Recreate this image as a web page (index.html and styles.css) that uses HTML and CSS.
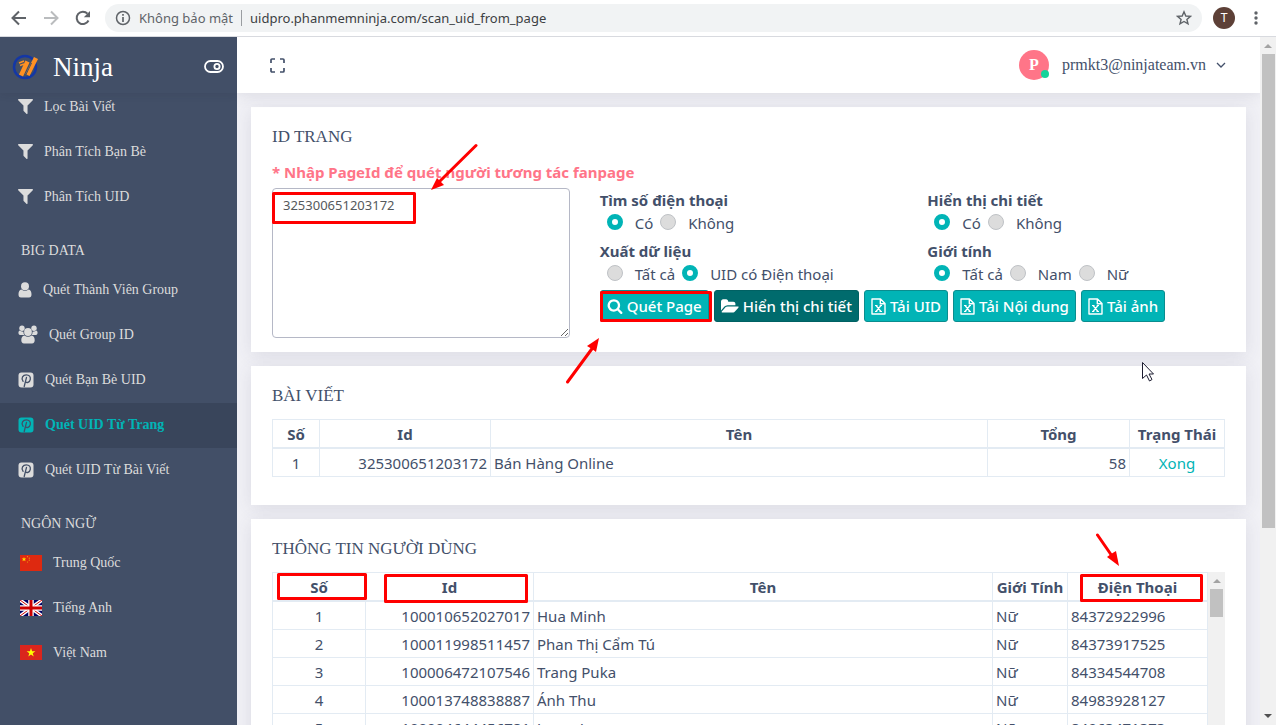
FILE: index.html
```html
<!DOCTYPE html>
<html lang="vi">
<head>
<meta charset="utf-8">
<title>Ninja - Quét UID Từ Trang</title>
<link rel="stylesheet" href="styles.css">
</head>
<body>
<svg class="defs" aria-hidden="true">
  <symbol id="filter" viewBox="192 256 1408 1408"><path fill="currentColor" d="M1595 295q17 41-14 70l-493 493v742q0 42-39 59-13 5-25 5-27 0-45-19l-256-256q-19-19-19-45v-486l-493-493q-31-29-14-70 17-39 59-39h1280q42 0 59 39z"/></symbol>
  <symbol id="pin" viewBox="0 0 16 16"><rect x=".5" y=".5" width="15" height="15" rx="3" fill="currentColor"/><path class="cut" d="M5.1 9.300C2.600 6 5 2.900 8.300 2.900c3 0 4.400 2 4 4.400-.5 3-3.800 4.200-4.900 2.200M8.500 5.400 6.200 14.500" fill="none" stroke-width="1.300" stroke-linecap="round"/></symbol>
  <symbol id="excel" viewBox="0 0 15 17"><path d="M1 1h8.500L14 5.500V16H1zM9.300 1v4.700H14" fill="none" stroke="currentColor" stroke-width="1.400" stroke-linejoin="round"/><path d="M5 7.500l5 6M10 7.500l-5 6M4 7.500h2.500M8.700 7.500H11M4 13.500h2.300M8.500 13.500H11" fill="none" stroke="currentColor" stroke-width="1.200"/></symbol>
</svg>

<header class="browser">
  <button class="nav-btn" aria-label="Quay lại"><svg width="16" height="16" viewBox="0 0 16 16"><path d="M15 8H2M8 1.500 1.500 8 8 14.500" fill="none" stroke="#5f6368" stroke-width="2"/></svg></button>
  <button class="nav-btn" aria-label="Tiến"><svg width="16" height="16" viewBox="0 0 16 16"><path d="M1 8h13M8 1.500 14.500 8 8 14.500" fill="none" stroke="#babcbe" stroke-width="2"/></svg></button>
  <button class="nav-btn" aria-label="Tải lại"><svg width="16" height="16" viewBox="0 0 16 16"><path d="M13.500 10.500A6.200 6.200 0 1 1 12.500 3.700" fill="none" stroke="#5f6368" stroke-width="2"/><path d="M15 1v6.200H8.800z" fill="#5f6368"/></svg></button>
  <div class="omnibox">
    <svg width="16" height="16" viewBox="0 0 16 16"><circle cx="8" cy="8" r="6.500" fill="none" stroke="#5f6368" stroke-width="1.500"/><path d="M8 7v5M8 4v1.700" stroke="#5f6368" stroke-width="1.700"/></svg>
    <span class="insecure">Không bảo mật</span>
    <input class="url" aria-label="Địa chỉ" value="uidpro.phanmemninja.com/scan_uid_from_page">
    <svg width="16" height="16" viewBox="0 0 16 16"><path d="M8 1.800l1.800 4.200 4.600.4-3.500 3 1.100 4.500L8 11.500l-4 2.400 1.100-4.500-3.500-3 4.600-.4z" fill="none" stroke="#5f6368" stroke-width="1.400"/></svg>
  </div>
  <span class="profile">T</span>
  <button class="nav-btn menu" aria-label="Trình đơn"><svg width="4" height="14" viewBox="0 0 4 14"><g fill="#5f6368"><circle cx="2" cy="2" r="1.700"/><circle cx="2" cy="7" r="1.700"/><circle cx="2" cy="12" r="1.700"/></g></svg></button>
</header>

<div class="app">
  <aside class="sidebar">
    <div class="brand">
      <svg width="28" height="28" viewBox="0 0 28 28"><circle cx="13" cy="14" r="11" fill="none" stroke="#1437a5" stroke-width="2.500"/><path d="M9 22.500 15.500 8.500M15.500 22 24 5" stroke="#ff9123" stroke-width="4.500"/><path d="M13 23.500 19.500 10" stroke="#424f67" stroke-width="1"/><path d="M7 10l5-2M8 12.500l4-1.500" stroke="#ff9123" stroke-width="1.500"/></svg>
      <span class="brand-name">Ninja</span>
      <button class="plain" aria-label="Thu gọn"><svg width="20" height="14" viewBox="0 0 20 14"><rect x="1" y="1" width="18" height="11" rx="5.500" fill="none" stroke="#fff" stroke-width="1.800"/><circle cx="13" cy="6.500" r="2.600" fill="none" stroke="#fff" stroke-width="1.800"/></svg></button>
    </div>
    <nav class="menu-list">
      <a href="#" class="item"><svg width="15" height="15"><use href="#filter"/></svg><span>Lọc Bài Viết</span></a>
      <a href="#" class="item"><svg width="15" height="15"><use href="#filter"/></svg><span>Phân Tích Bạn Bè</span></a>
      <a href="#" class="item"><svg width="15" height="15"><use href="#filter"/></svg><span>Phân Tích UID</span></a>
      <h2 class="group">BIG DATA</h2>
      <a href="#" class="item"><svg width="14" height="16" viewBox="0 0 14 16"><g fill="currentColor"><circle cx="7" cy="4.300" r="4"/><path d="M3.500 7.500c2 1.800 5 1.800 7 0 2.300.3 3 2.500 3 5 0 2-.8 3-2.500 3H3c-1.700 0-2.500-1-2.500-3 0-2.500.7-4.700 3-5z"/></g></svg><span>Quét Thành Viên Group</span></a>
      <a href="#" class="item"><svg width="20" height="19" viewBox="0 0 20 19"><g fill="currentColor"><circle cx="4" cy="3.200" r="2.700"/><circle cx="16" cy="3.200" r="2.700"/><path d="M1.500 5.500C4 7 5 6.500 5.500 6.700 5.300 8.500 6 9.300 6.400 10H2C.3 10-.3 7 1.500 5.500zM18.500 5.500C16 7 15 6.500 14.500 6.700c.2 1.800-.5 2.600-.9 3.300H18c1.700 0 2.300-3 .5-4.500z"/><circle cx="10" cy="7" r="3.900"/><path d="M6.500 10.500c2 1.700 5 1.700 7 0 2.500.3 3.200 2.500 3.200 4.800 0 2-.9 3.200-2.700 3.200H6c-1.800 0-2.700-1.200-2.700-3.200 0-2.300.7-4.500 3.200-4.800z"/></g></svg><span>Quét Group ID</span></a>
      <a href="#" class="item"><svg width="16" height="16"><use href="#pin"/></svg><span>Quét Bạn Bè UID</span></a>
      <a href="#" class="item active"><svg width="16" height="16"><use href="#pin"/></svg><span>Quét UID Từ Trang</span></a>
      <a href="#" class="item"><svg width="16" height="16"><use href="#pin"/></svg><span>Quét UID Từ Bài Viết</span></a>
      <h2 class="group">NGÔN NGỮ</h2>
      <a href="#" class="item lang"><svg width="22" height="16" viewBox="0 0 22 16"><path fill="#de2910" d="M0 0h22v16H0z"/><path fill="#ffde00" d="M4 2l.6 1.600h1.700L5 4.600l.5 1.700L4 5.300 2.500 6.300 3 4.600 1.700 3.600h1.700z"/><g fill="#f0a010"><circle cx="7.500" cy="1.700" r=".6"/><circle cx="9.300" cy="3.200" r=".6"/><circle cx="9.300" cy="5.200" r=".6"/><circle cx="7.500" cy="7" r=".6"/></g></svg><span>Trung Quốc</span></a>
      <a href="#" class="item lang"><svg width="22" height="16" viewBox="0 0 22 16"><path fill="#006" d="M0 0h22v16H0z"/><path d="M0 0l22 16M22 0 0 16" stroke="#fff" stroke-width="3.500"/><path d="M0 0l22 16M22 0 0 16" stroke="#c00" stroke-width="1"/><path d="M11 0v16M0 8h22" stroke="#fff" stroke-width="5.500"/><path d="M11 0v16M0 8h22" stroke="#c00" stroke-width="3"/></svg><span>Tiếng Anh</span></a>
      <a href="#" class="item lang"><svg width="22" height="15" viewBox="0 0 22 15"><path fill="#da251d" d="M0 0h22v15H0z"/><path fill="#ff0" d="M11 3l1.100 3.200h3.300l-2.700 2 1 3.200L11 9.500l-2.700 1.900 1-3.200-2.700-2h3.300z"/></svg><span>Việt Nam</span></a>
    </nav>
  </aside>

  <main class="main">
    <div class="topbar">
      <button class="plain" aria-label="Toàn màn hình"><svg width="15" height="15" viewBox="0 0 15 15"><path d="M1 5V2q0-1 1-1h3M10 1h3q1 0 1 1v3M14 10v3q0 1-1 1h-3M5 14H2q-1 0-1-1v-3" fill="none" stroke="#43506a" stroke-width="1.700"/></svg></button>
      <button class="account">
        <span class="avatar">P<i class="online"></i></span>
        <span>prmkt3@ninjateam.vn</span>
        <svg width="10" height="6" viewBox="0 0 10 6"><path d="M1 1l4 4 4-4" fill="none" stroke="#43506a" stroke-width="1.300"/></svg>
      </button>
    </div>

    <div class="cards">
      <section class="card">
        <h1 class="title">ID TRANG</h1>
        <label class="note" for="page-id">* Nhập PageId để quét người tương tác fanpage</label>
        <form class="form">
          <textarea class="ids" id="page-id">325300651203172</textarea>
          <fieldset class="field"><legend>Tìm số điện thoại</legend>
            <div class="choices"><label><input type="radio" name="phone" checked>Có</label><label><input type="radio" name="phone">Không</label></div></fieldset>
          <fieldset class="field"><legend>Hiển thị chi tiết</legend>
            <div class="choices"><label><input type="radio" name="detail" checked>Có</label><label><input type="radio" name="detail">Không</label></div></fieldset>
          <fieldset class="field"><legend>Xuất dữ liệu</legend>
            <div class="choices"><label><input type="radio" name="export">Tất cả</label><label><input type="radio" name="export" checked>UID có Điện thoại</label></div></fieldset>
          <fieldset class="field"><legend>Giới tính</legend>
            <div class="choices"><label><input type="radio" name="sex" checked>Tất cả</label><label><input type="radio" name="sex">Nam</label><label><input type="radio" name="sex">Nữ</label></div></fieldset>
          <div class="actions">
            <button type="button" class="btn"><svg width="16" height="16" viewBox="0 0 1792 1792"><path fill="currentColor" d="M1216 832q0-185-131.500-316.500t-316.500-131.500-316.500 131.500-131.500 316.500 131.500 316.500 316.500 131.500 316.500-131.500 131.500-316.500zm512 832q0 52-38 90t-90 38q-54 0-90-38l-343-342q-179 124-399 124-143 0-273.500-55.500t-225-150-150-225-55.500-273.500 55.500-273.500 150-225 225-150 273.500-55.500 273.500 55.500 225 150 150 225 55.500 273.500q0 220-124 399l343 343q37 37 37 90z"/></svg>Quét Page</button>
            <button type="button" class="btn dark"><svg width="18" height="17" viewBox="0 0 1920 1792"><path fill="currentColor" d="M1879 952q0 31-31 66l-336 396q-43 51-120.500 86.500t-143.500 35.500h-1088q-34 0-60.500-13t-26.500-43q0-31 31-66l336-396q43-51 120.500-86.500t143.500-35.500h1088q34 0 60.500 13t26.500 43zm-343-344v160h-832q-94 0-197 47.500t-164 119.500l-337 396-5 6q0-4-.5-12.500t-.5-12.500v-960q0-92 66-158t158-66h320q92 0 158 66t66 158v32h544q92 0 158 66t66 158z"/></svg>Hiển thị chi tiết</button>
            <button type="button" class="btn"><svg width="15" height="17"><use href="#excel"/></svg>Tải UID</button>
            <button type="button" class="btn"><svg width="15" height="17"><use href="#excel"/></svg>Tải Nội dung</button>
            <button type="button" class="btn"><svg width="15" height="17"><use href="#excel"/></svg>Tải ảnh</button>
          </div>
        </form>
      </section>

      <section class="card posts">
        <h1 class="title">BÀI VIẾT</h1>
        <table class="grid">
          <colgroup><col class="w47"><col class="w171"><col><col class="w142"><col class="w95"></colgroup>
          <thead><tr><th>Số</th><th>Id</th><th>Tên</th><th>Tổng</th><th>Trạng Thái</th></tr></thead>
          <tbody><tr><td class="c">1</td><td class="r">325300651203172</td><td>Bán Hàng Online</td><td class="r">58</td><td class="c"><a href="#">Xong</a></td></tr></tbody>
        </table>
      </section>

      <section class="card users">
        <h1 class="title">THÔNG TIN NGƯỜI DÙNG</h1>
        <div class="scroller">
          <table class="grid">
            <colgroup><col class="w93"><col class="w168"><col><col class="w75"><col class="w140"></colgroup>
            <thead><tr><th>Số</th><th>Id</th><th>Tên</th><th>Giới Tính</th><th>Điện Thoại</th></tr></thead>
            <tbody>
              <tr><td class="c">1</td><td class="r">100010652027017</td><td>Hua Minh</td><td>Nữ</td><td>84372922996</td></tr>
              <tr><td class="c">2</td><td class="r">100011998511457</td><td>Phan Thị Cẩm Tú</td><td>Nữ</td><td>84373917525</td></tr>
              <tr><td class="c">3</td><td class="r">100006472107546</td><td>Trang Puka</td><td>Nữ</td><td>84334544708</td></tr>
              <tr><td class="c">4</td><td class="r">100013748838887</td><td>Ánh Thu</td><td>Nữ</td><td>84983928127</td></tr>
              <tr><td class="c">5</td><td class="r">100004644456781</td><td>Jenny Lee</td><td>Nữ</td><td>84963471373</td></tr>
            </tbody>
          </table>
          <div class="bar"><svg width="8" height="5" viewBox="0 0 8 5"><path d="M0 5l4-4 4 4z" fill="#a3a3a3"/></svg><span class="thumb short"></span></div>
        </div>
      </section>
    </div>
  </main>
  <div class="bar page-bar"><svg width="8" height="5" viewBox="0 0 8 5"><path d="M0 5l4-4 4 4z" fill="#a3a3a3"/></svg><span class="thumb"></span><svg width="8" height="5" viewBox="0 0 8 5"><path d="M0 0l4 4 4-4z" fill="#505050"/></svg></div>
</div>

<svg class="marks" width="1276" height="725" viewBox="0 0 1276 725" aria-hidden="true">
  <g fill="none" stroke="#f00" stroke-width="3" stroke-linejoin="round" stroke-linecap="round">
    <rect x="273.500" y="193.500" width="141" height="29"/>
    <rect x="601.500" y="292.500" width="109" height="28"/>
    <rect x="278.500" y="574.500" width="87" height="24"/>
    <rect x="385.500" y="575.500" width="141" height="26"/>
    <rect x="1081.500" y="575.500" width="120" height="25"/>
    <path d="M476 145.500 438 183M567.500 382 594 346M1097.500 535 1112 556"/>
  </g>
  <g fill="#f00"><path d="M431 190l6-12 3 3 4 4z"/><path d="M599 338l-3 14-4-3-5-3z"/><path d="M1119 566l-12-9 4-3 5-3z"/></g>
  <path d="M1142.500 362.500v16l4-3.500 3 6 2.500-1.500-3-5.500h4.500z" fill="#fff" stroke="#1c1c30"/>
</svg>
</body>
</html>
```
FILE: styles.css
```css
* { box-sizing: border-box; }
body {
  margin: 0;
  height: 100vh;
  display: flex;
  flex-direction: column;
  overflow: hidden;
  font: 15px/24px "Noto Sans", "Open Sans", sans-serif;
  color: #43506a;
}
button { font: inherit; color: inherit; cursor: pointer; }
a { color: #01b4b6; text-decoration: none; }
.defs { position: absolute; width: 0; height: 0; }

/* Browser bar */
.browser {
  flex: none;
  height: 37px;
  display: flex;
  align-items: center;
  gap: 16px;
  padding: 0 18px 0 11px;
  background: #fff;
  border-bottom: 1px solid #d8dadf;
}
.nav-btn, .plain { display: flex; padding: 0; border: 0; background: none; }
.omnibox {
  flex: 1;
  display: flex;
  align-items: center;
  height: 28px;
  margin-left: -2px;
  padding: 0 10px;
  border-radius: 14px;
  background: #f1f3f4;
  font-size: 13px;
}
.insecure {
  margin: 0 8px;
  padding-right: 8px;
  line-height: 16px;
  border-right: 1px solid #9a9da1;
  color: #5f6368;
}
.url { flex: 1; min-width: 0; padding: 0; border: 0; background: none; outline: 0; font: inherit; color: #3c4043; }
.profile {
  width: 22px;
  margin-left: -5px;
  border-radius: 50%;
  background: #5d4037;
  color: #fff;
  font: 12px/22px Roboto, sans-serif;
  text-align: center;
}
.browser .menu { margin-left: 3px; }

/* Sidebar */
.app { flex: 1; min-height: 0; display: flex; }
.sidebar {
  flex: none;
  width: 237px;
  overflow: hidden;
  background: #424f67;
  color: #dcdcdc;
  font: 14px/20px "Liberation Serif", serif;
}
.brand {
  position: relative;
  z-index: 1;
  height: 56px;
  display: flex;
  align-items: center;
  gap: 13px;
  padding: 4px 13px 0 12px;
  background: #424f67;
  box-shadow: 0 1px 8px rgba(40, 45, 60, .12);
}
.brand-name { flex: 1; color: #fff; font-size: 27px; line-height: 32px; }
.menu-list { margin-top: -8px; }
.item { display: flex; align-items: center; gap: 11px; height: 45px; padding: 0 0 2px 18px; color: inherit; }
.item.active { background: #39455b; color: #01b4b6; font-weight: bold; }
.lang { padding-left: 20px; }
.cut { stroke: #424f67; }
.group { margin: 0; padding: 21px 0 7px 21px; font: inherit; }

/* Main area */
.main { flex: 1; min-width: 0; overflow: hidden; background: #f1f1f6; }
.topbar {
  position: relative;
  height: 56px;
  display: flex;
  justify-content: space-between;
  align-items: center;
  padding: 0 34px 0 33px;
  background: #fff;
  box-shadow: 0 2px 14px rgba(69, 65, 88, .12);
}
.account {
  display: flex;
  align-items: center;
  gap: 10px;
  padding: 0;
  border: 0;
  background: none;
  font: 16px/24px "Liberation Serif", serif;
}
.avatar {
  position: relative;
  width: 30px;
  margin-right: 3px;
  border-radius: 50%;
  background: #ff7588;
  color: #fff;
  font-weight: bold;
  line-height: 30px;
}
.online { position: absolute; right: 0; bottom: 2px; width: 8px; height: 8px; border-radius: 50%; background: #16d39a; }
.cards { display: flex; flex-direction: column; gap: 14px; padding: 14px; }
.card { padding: 18px 21px 14px; background: #fff; box-shadow: 0 3px 18px rgba(69, 65, 98, .12); }
.posts { padding-bottom: 28px; }
.title { margin: 0 0 11px; font: 17px/24px "Liberation Serif", serif; }
.note { display: block; margin-bottom: 3px; line-height: 25px; font-weight: bold; color: #ff7588; }

/* Form */
.form { display: grid; grid-template-columns: repeat(3, 1fr); grid-template-rows: auto auto 1fr; gap: 5px 30px; }
.ids {
  grid-row: span 3;
  width: 100%;
  height: 150px;
  padding: 6px 10px;
  border: 1px solid #b5b8c6;
  border-radius: 4px;
  font: 13px/20px "Noto Sans", "Open Sans", sans-serif;
  color: #55595c;
  outline: 0;
}
.field { min-width: 0; height: 46px; margin: 0; padding: 0; border: 0; }
.field legend { padding: 0; font-weight: bold; }
.choices { display: flex; line-height: 22px; }
.choices label { display: flex; align-items: center; gap: 12px; margin-left: 7px; white-space: nowrap; }
.choices input {
  appearance: none;
  width: 16px;
  height: 16px;
  margin: 0 0 3px;
  border: 1px solid #bfc2c6;
  border-radius: 50%;
  background: #dcdcdc;
}
.choices input:checked { border: 5px solid #01b4b6; background: #fff; }
.actions { grid-column: 2 / 4; display: flex; gap: 5px; align-items: flex-start; }
.btn {
  display: flex;
  align-items: center;
  gap: 4px;
  height: 32px;
  padding: 0 6px;
  border: 1px solid #0a8d8f;
  border-radius: 3px;
  background: #01b4b6;
  color: #fff;
  font-weight: 500;
  white-space: nowrap;
}
.btn.dark { background: #006b6d; border-color: #006163; }

/* Tables */
.grid { width: 100%; table-layout: fixed; border-collapse: collapse; }
.grid th, .grid td { height: 28px; padding: 2px 3px 0; border: 1px solid #e3ebf3; line-height: 25px; white-space: nowrap; }
.grid th { border-bottom-width: 2px; }
.c { text-align: center; }
.r { text-align: right; }
.w47 { width: 47px; }
.w75 { width: 75px; }
.w93 { width: 93px; }
.w95 { width: 95px; }
.w140 { width: 140px; }
.w142 { width: 142px; }
.w168 { width: 168px; }
.w171 { width: 171px; }
.scroller { display: flex; }

/* Scroll bars */
.bar { flex: none; width: 17px; display: flex; flex-direction: column; align-items: center; gap: 6px; padding-top: 6px; background: #f1f1f1; }
.page-bar { width: 16px; justify-content: space-between; padding-bottom: 6px; }
.thumb { width: 13px; height: 474px; background: #c1c1c1; }
.thumb.short { height: 28px; }
.page-bar .thumb { margin-bottom: auto; }

/* Highlights and arrows over the page */
.marks { position: absolute; left: 0; top: 0; pointer-events: none; }
```
